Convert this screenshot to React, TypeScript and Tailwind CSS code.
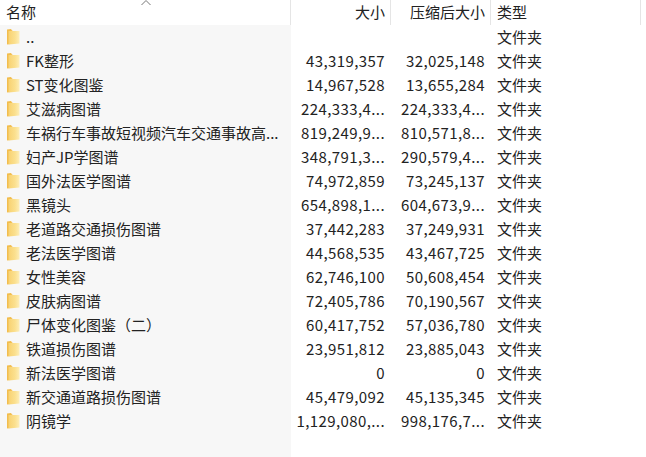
const rows: [string, string, string][] = [
  ["..", "", ""],
  ["FK整形", "43,319,357", "32,025,148"],
  ["ST变化图鉴", "14,967,528", "13,655,284"],
  ["艾滋病图谱", "224,333,4...", "224,333,4..."],
  ["车祸行车事故短视频汽车交通事故高...", "819,249,9...", "810,571,8..."],
  ["妇产JP学图谱", "348,791,3...", "290,579,4..."],
  ["国外法医学图谱", "74,972,859", "73,245,137"],
  ["黑镜头", "654,898,1...", "604,673,9..."],
  ["老道路交通损伤图谱", "37,442,283", "37,249,931"],
  ["老法医学图谱", "44,568,535", "43,467,725"],
  ["女性美容", "62,746,100", "50,608,454"],
  ["皮肤病图谱", "72,405,786", "70,190,567"],
  ["尸体变化图鉴（二）", "60,417,752", "57,036,780"],
  ["铁道损伤图谱", "23,951,812", "23,885,043"],
  ["新法医学图谱", "0", "0"],
  ["新交通道路损伤图谱", "45,479,092", "45,135,345"],
  ["阴镜学", "1,129,080,...", "998,176,7..."],
];

function Folder() {
  return (
    <svg width="13" height="18" viewBox="0 0 13 18" className="shrink-0">
      <defs>
        <linearGradient id="fg" x1="0" x2="1" y1="0" y2="0">
          <stop offset="0" stopColor="#f8d272" />
          <stop offset="0.6" stopColor="#fbe08f" />
          <stop offset="1" stopColor="#fdeeb9" />
        </linearGradient>
      </defs>
      <path d="M0 1.5 L4 1 L5 2.5 L6 3 L6 15.5 L0 16.5 Z" fill="#f2bd4e" />
      <path d="M1.5 3 L12.5 3 L12.5 15.5 L1.5 16.5 Z" fill="url(#fg)" />
    </svg>
  );
}

export default function App() {
  return (
    <div
      className="w-[646px] h-[457px] bg-white text-[15px] text-[#222] overflow-hidden flex flex-col"
      style={{ fontFamily: '"Noto Sans CJK SC", "Noto Sans", sans-serif' }}
    >
      <div className="h-[25px] flex shrink-0 leading-[23px] relative">
        <div className="w-[291px] pl-[6px] border-r border-[#e5e5e5]">名称</div>
        <div className="w-[100px] pr-[5px] text-right border-r border-[#e5e5e5]">大小</div>
        <div className="w-[100px] pr-[5px] text-right border-r border-[#e5e5e5]">压缩后大小</div>
        <div className="w-[150px] pl-[6px] border-r border-[#e5e5e5]">类型</div>
        <svg width="10" height="6" viewBox="0 0 10 6" className="absolute left-[141px] top-0">
          <path d="M0.5 5 L5 0.5 L9.5 5" fill="none" stroke="#777" />
        </svg>
      </div>
      <div className="flex flex-1">
        <div className="w-[291px] bg-[#f7f7f7] flex flex-col">
          {rows.map((r, i) => (
            <div key={i} className="h-[24px] flex items-center pl-[7px] gap-[6px] leading-[24px] whitespace-nowrap">
              <Folder />
              <span>{r[0]}</span>
            </div>
          ))}
        </div>
        <div className="flex-1 flex flex-col">
          {rows.map((r, i) => (
            <div key={i} className="h-[24px] flex leading-[24px] whitespace-nowrap">
              <div className="w-[100px] pr-[6px] text-right tracking-[0.4px]">{r[1]}</div>
              <div className="w-[100px] pr-[6px] text-right tracking-[0.4px]">{r[2]}</div>
              <div className="pl-[6px]">文件夹</div>
            </div>
          ))}
        </div>
      </div>
    </div>
  );
}
